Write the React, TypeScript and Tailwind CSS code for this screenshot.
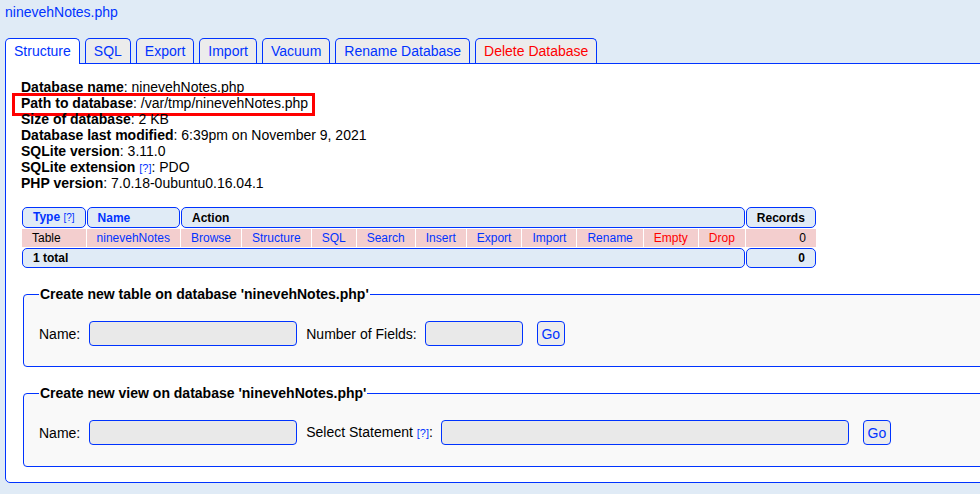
import React from 'react';

const tabs = [
    { label: 'Structure', active: true },
    { label: 'SQL' },
    { label: 'Export' },
    { label: 'Import' },
    { label: 'Vacuum' },
    { label: 'Rename Database' },
    { label: 'Delete Database', danger: true },
];

// each action link in the table row
const actions = [
    { label: 'Browse' },
    { label: 'Structure' },
    { label: 'SQL' },
    { label: 'Search' },
    { label: 'Insert' },
    { label: 'Export' },
    { label: 'Import' },
    { label: 'Rename' },
    { label: 'Empty', danger: true },
    { label: 'Drop', danger: true },
];

const info: [string, string, boolean?][] = [
    ['Database name', 'ninevehNotes.php'],
    ['Path to database', '/var/tmp/ninevehNotes.php'],
    ['Size of database', '2 KB'],
    ['Database last modified', '6:39pm on November 9, 2021'],
    ['SQLite version', '3.11.0'],
    ['SQLite extension', 'PDO', true],
    ['PHP version', '7.0.18-0ubuntu0.16.04.1'],
];

function Help() {
    return <span className="text-[11px] text-[#03f]">[?]</span>;
}

function Field({ w }: { w: string }) {
    return <input className={`${w} h-[25px] bg-[#e9e9e9] border border-[#03f] rounded-[4px] outline-none`} />;
}

function GoButton() {
    return (
        <button className="w-[28px] h-[25px] bg-[#ececec] border border-[#03f] rounded-[4px] text-[14px] text-[#03f] leading-[16px]">
            Go
        </button>
    );
}

export default function App() {
    return (
        <div className="w-full min-h-[494px] bg-[#e0ebf6] overflow-hidden text-[14px] leading-[16px] text-black font-['Liberation_Sans',Arial,sans-serif]">
            <div className="w-[1030px] pl-[5px]">
                {/* Database title */}
                <div className="h-[38px] pt-[4px]">
                    <a className="text-[#03f]">ninevehNotes.php</a>
                </div>

                {/* Tabs */}
                <div className="flex items-end gap-[5px] h-[25px]">
                    {tabs.map(t => (
                        <div
                            key={t.label}
                            className={`relative z-10 h-[25px] px-[8px] pt-[4px] border border-b-0 border-[#03f] rounded-t-[5px] ${t.active ? 'bg-white h-[26px] mb-[-1px]' : 'bg-[#ececec]'} ${t.danger ? 'text-[#f00]' : 'text-[#03f]'}`}
                        >
                            {t.label}
                        </div>
                    ))}
                </div>

                {/* Main panel */}
                <div className="bg-white border border-[#03f] rounded-bl-[5px] pl-[15px] pt-[15px] pb-[15px]">
                    <div>
                        {info.map(([k, v, help]) => (
                            <div key={k} className="relative h-[16px]">
                                <b>{k}</b>
                                {help && <> <Help /></>}: {v}
                                {k === 'Path to database' && (
                                    <div className="absolute left-[-9px] top-[-2px] w-[303px] h-[23px] border-[3px] border-[#f00]" />
                                )}
                            </div>
                        ))}
                    </div>

                    {/* Tables listing */}
                    <table className="mt-[15px] border-separate border-spacing-[1px] text-[12px] leading-[14px]">
                        <thead>
                            <tr>
                                <th className="text-left font-bold px-[10px] py-[2px] border border-[#03f] rounded-[5px] bg-[#e0ebf6] text-[#03f] whitespace-nowrap">
                                    Type <span className="text-[10px] font-normal">[?]</span>
                                </th>
                                <th className="text-left font-bold px-[10px] py-[2px] border border-[#03f] rounded-[5px] bg-[#e0ebf6] text-[#03f]">Name</th>
                                <th colSpan={10} className="text-left font-bold px-[10px] py-[2px] border border-[#03f] rounded-[5px] bg-[#e0ebf6]">Action</th>
                                <th className="text-center font-bold px-[10px] py-[2px] border border-[#03f] rounded-[5px] bg-[#e0ebf6]">Records</th>
                            </tr>
                        </thead>
                        <tbody>
                            <tr className="bg-[#f3cece]">
                                <td className="px-[10px] py-[2px]">Table</td>
                                <td className="px-[10px] py-[2px] text-[#03f]">ninevehNotes</td>
                                {actions.map(a => (
                                    <td key={a.label} className={`px-[10px] py-[2px] text-center ${a.danger ? 'text-[#f00]' : 'text-[#03f]'}`}>
                                        {a.label}
                                    </td>
                                ))}
                                <td className="px-[10px] py-[2px] text-right">0</td>
                            </tr>
                            <tr>
                                <td colSpan={12} className="font-bold px-[10px] py-[2px] border border-[#03f] rounded-[5px] bg-[#e0ebf6]">1 total</td>
                                <td className="font-bold text-right px-[10px] py-[2px] border border-[#03f] rounded-[5px] bg-[#e0ebf6]">0</td>
                            </tr>
                        </tbody>
                    </table>

                    {/* Create table */}
                    <fieldset className="mt-[17px] ml-[2px] bg-[#f9f9f9] border border-[#03f] rounded-[4px] px-[15px] pt-[19px] pb-[20px]">
                        <legend className="px-[1px] font-bold">Create new table on database 'ninevehNotes.php'</legend>
                        <div className="flex items-center h-[25px]">
                            <span>Name:</span>
                            <span className="ml-[9px]"><Field w="w-[208px]" /></span>
                            <span className="ml-[9px]">Number of Fields:</span>
                            <span className="ml-[8px]"><Field w="w-[98px]" /></span>
                            <span className="ml-[14px]"><GoButton /></span>
                        </div>
                    </fieldset>

                    {/* Create view */}
                    <fieldset className="mt-[18px] ml-[2px] bg-[#f9f9f9] border border-[#03f] rounded-[4px] px-[15px] pt-[19px] pb-[21px]">
                        <legend className="px-[1px] font-bold">Create new view on database 'ninevehNotes.php'</legend>
                        <div className="flex items-center h-[25px]">
                            <span>Name:</span>
                            <span className="ml-[9px]"><Field w="w-[208px]" /></span>
                            <span className="ml-[9px]">Select Statement <Help />:</span>
                            <span className="ml-[8px]"><Field w="w-[408px]" /></span>
                            <span className="ml-[14px]"><GoButton /></span>
                        </div>
                    </fieldset>
                </div>
            </div>
        </div>
    );
}
